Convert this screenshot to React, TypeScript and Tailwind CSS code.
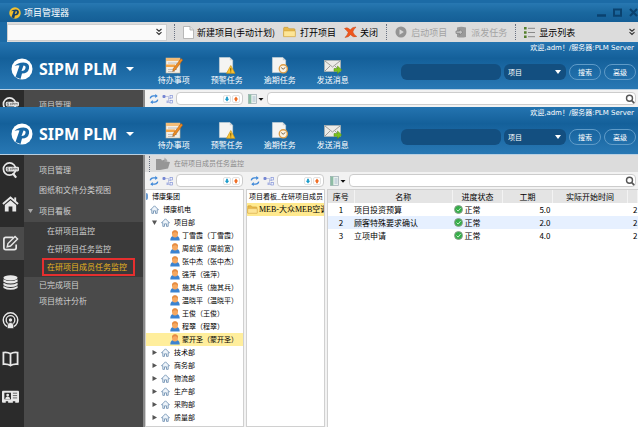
import React from "react";
import clsx from "clsx";

const people = ["丁雪霞", "周前宽", "张中杰", "强萍", "施其兵", "温晓平", "王俊", "程翠", "蒙开圣"];
const departments = ["技术部", "商务部", "物流部", "生产部", "采购部", "质量部"];

const tasks = [
    { id: 1, name: "项目投资预算", status: "正常", days: "5.0", start: "2" },
    { id: 2, name: "顾客特殊要求确认", status: "正常", days: "2.0", start: "2" },
    { id: 3, name: "立项申请", status: "正常", days: "4.0", start: "2" },
];

/* ---------- Icons ---------- */

function LogoIcon({ className, disc, letter }: { className: string; disc: string; letter: string }) {
    return (
        <svg viewBox="0 0 44 44" className={className}>
            <circle cx="22" cy="22" r="21" fill={disc} />
            <path
                d="M7 16 Q13 9 25 9 Q38 10 36 21 Q34 31 22 31 L19 42 L9 38 L17 15 Q12 14 7 16Z M25 15 L21 26 Q28 26 29 20 Q30 15 25 15Z"
                fill={letter}
                fillRule="evenodd"
            />
        </svg>
    );
}

function TodoIcon() {
    return (
        <svg viewBox="0 0 18 17" className="h-[17px] w-[18px]">
            <rect x="1" y="1" width="14" height="15" fill="#f2efe9" stroke="#c9b597" strokeWidth=".6" />
            <rect x="1" y="1" width="14" height="3" fill="#f3bd78" />
            <path d="M3 6h9M3 12.500h9M3 14.500h7" stroke="#b9b4ad" strokeWidth=".8" />
            <rect x="1" y="7.500" width="9" height="2.500" fill="#f6a545" />
            <path d="M16 1.500l1.800 1.500-7.500 10-2.600 1.400.6-2.900z" fill="#ec8a22" stroke="#9a5716" strokeWidth=".5" />
        </svg>
    );
}

function PagePath() {
    return (
        <>
            <path d="M1 .5h11l3 3v13H1z" fill="#f4f4f2" stroke="#d5d9dc" strokeWidth=".6" />
            <path d="M12 .5v3h3z" fill="#c7ced4" />
        </>
    );
}

function WarnTaskIcon() {
    return (
        <svg viewBox="0 0 18 18" className="h-[17px] w-[18px]">
            <PagePath />
            <path d="M13 9l4.500 8.300h-9z" fill="#f8c435" stroke="#cf9412" strokeWidth=".7" />
            <path d="M13 11.800v2.800M13 15.300v1" stroke="#6b4a00" strokeWidth="1" />
        </svg>
    );
}

function OverdueIcon() {
    return (
        <svg viewBox="0 0 18 18" className="h-[17px] w-[18px]">
            <PagePath />
            <circle cx="12.500" cy="12.500" r="4.300" fill="#fbf3e2" stroke="#db9c45" strokeWidth="1.400" />
            <path d="M10.300 11.200l2 1.800 2.400-2" fill="none" stroke="#5c4a34" strokeWidth=".9" />
        </svg>
    );
}

function MailIcon() {
    return (
        <svg viewBox="0 0 18 17" className="h-[17px] w-[18px]">
            <rect x=".5" y="3.500" width="16" height="11" fill="#ecebe7" stroke="#b9b6ae" strokeWidth=".6" />
            <path d="M1 4l7.500 6L16 4M1 14l5-5M16 14l-5-5" fill="none" stroke="#8d8a85" strokeWidth=".8" />
            <path d="M10 11.500h3.500V9l4.200 3.900-4.200 3.900v-2.500H10z" fill="#7cc21d" stroke="#4f8d0c" strokeWidth=".5" />
        </svg>
    );
}

function RefreshIcon() {
    return (
        <svg viewBox="0 0 16 16" className="h-[10px] w-[10px] shrink-0" fill="none" stroke="#3b86d8" strokeWidth="2.200">
            <path d="M2 7q1-4 5-4h4" />
            <path d="M14 9q-1 4-5 4H5" />
            <path d="M10 0l4 3-4 3.500zM6 9.500L2 13l4 3z" fill="#3b86d8" stroke="none" />
        </svg>
    );
}

function HierarchyIcon() {
    return (
        <svg viewBox="0 0 11 10" className="h-[10px] w-[11px] shrink-0">
            <path d="M3 2.500h3M6.500 2v6.500H9M6.500 4.500H9" fill="none" stroke="#aab4dd" strokeWidth=".7" />
            <rect x=".5" y="1" width="3" height="3" rx="1" fill="#7485d3" />
            <rect x="8" y="1.500" width="2.500" height="2.500" fill="#f0f2fc" stroke="#7485d3" strokeWidth=".6" />
            <rect x="8" y="6.500" width="2.500" height="2.500" fill="#f0f2fc" stroke="#7485d3" strokeWidth=".6" />
            <rect x="4.500" y="6.500" width="2" height="2.500" fill="#a9b4e4" />
        </svg>
    );
}

function ArrowIcon({ up }: { up?: boolean }) {
    return (
        <svg viewBox="0 0 8 8" className={clsx("h-[6px] w-[6px]", up && "rotate-180")}>
            <path d="M2.800 1h2.400v2.500H7L4 7.200 1 3.500h1.800z" fill={up ? "#f06a20" : "#1b9ccb"} />
        </svg>
    );
}

function ListMenuIcon() {
    return (
        <svg viewBox="0 0 16 10" className="h-[10px] w-4 shrink-0">
            <rect x=".5" y=".5" width="8" height="9" fill="#e9f1ee" stroke="#9aaab2" strokeWidth=".7" />
            <rect x=".5" y=".5" width="2.800" height="9" fill="#8dbca4" />
            <path d="M4.500 3h3M4.500 5h3M4.500 7h3" stroke="#8fa5c0" strokeWidth=".7" />
            <path d="M10.500 4h5L13 6.800z" fill="#111" />
        </svg>
    );
}

function SearchIcon() {
    return (
        <svg viewBox="0 0 10 10" className="h-[10px] w-[10px]" fill="none" stroke="#555">
            <circle cx="4.500" cy="4.200" r="3" strokeWidth="1.400" />
            <path d="M6.700 6.500l2.500 2.700" strokeWidth="1.800" />
        </svg>
    );
}

function FolderIcon({ className }: { className: string }) {
    return (
        <svg viewBox="0 0 14 12" className={className}>
            <path d="M.7 10.500V2q0-1 1-1h3.500l1.200 1.500h5.500q1 0 1 1v7z" fill="#e9b949" stroke="#c08e28" strokeWidth=".6" />
            <path d="M.7 11V5.500q0-.7.800-.7h11q.8 0 .8.700V11z" fill="#fde596" stroke="#cf9f3c" strokeWidth=".6" />
        </svg>
    );
}

function HouseIcon() {
    return (
        <svg viewBox="0 0 10 10" className="h-[9px] w-[9px] shrink-0">
            <path d="M.6 5.300L5 .9l4.400 4.400H8v4H6.100V6.500H3.900v2.800H2v-4z" fill="#eef4fa" stroke="#587ea5" strokeWidth=".8" />
        </svg>
    );
}

function PersonIcon() {
    return (
        <svg viewBox="0 0 10 11" className="h-[11px] w-[10px] shrink-0">
            <path d="M.3 10.500Q.3 6.500 3 6h4q2.700.5 2.700 4.500z" fill="#3b83d1" />
            <ellipse cx="5" cy="4" rx="3" ry="3.500" fill="#f6a860" />
            <path d="M2 4Q1.800.3 5 .3T8 4Q6.800 2 5 2.200T2 4z" fill="#e58c42" />
        </svg>
    );
}

function ChevronsIcon() {
    return (
        <svg viewBox="0 0 8 8" className="h-2 w-2" fill="none" stroke="#333" strokeWidth="1.100">
            <path d="M1.500 1l2.500 2.200L6.500 1M1.500 4.200L4 6.500l2.500-2.300" />
        </svg>
    );
}

/* ---------- Window chrome ---------- */

function TitleBar() {
    return (
        <div className="flex h-[22px] items-center border-t-[3px] border-[#1c6ba6] bg-linear-to-b from-[#2878b2] via-[#1a689f] to-[#145e96] pl-[9px]">
            <LogoIcon className="h-3 w-3" disc="#f3c02f" letter="#123f6b" />
            <h1 className="ml-[3px] text-[9px] leading-none text-white">项目管理器</h1>
            <div className="ml-auto flex items-center gap-[7px]">
                <button aria-label="最小化">
                    <svg viewBox="0 0 9 9" className="h-[9px] w-[9px]"><path d="M0 7.500h9" stroke="#0a426f" strokeWidth="2.500" /></svg>
                </button>
                <button aria-label="最大化">
                    <svg viewBox="0 0 9 9" className="h-[9px] w-[9px]"><path d="M1 1.500h7v6.300H1z" fill="none" stroke="#0a426f" strokeWidth="2" /></svg>
                </button>
                <button aria-label="关闭窗口">
                    <svg viewBox="0 0 9 9" className="h-[9px] w-[9px]"><path d="M1 1l7 7M8 1L1 8" stroke="#0a426f" strokeWidth="2.200" /></svg>
                </button>
            </div>
        </div>
    );
}

function Divider() {
    return <span className="h-4 border-l border-dotted border-gray-500" />;
}

function MainToolbar() {
    return (
        <div className="bg-[#1c6ba6] pl-[7px]">
            <div className="flex h-5 items-center whitespace-nowrap bg-[#dcdcdc] text-[9px] leading-none text-black">
                <div className="flex h-[17px] w-[160px] items-center border border-[#cfcfcf] bg-[#fafafa] pr-[3px]">
                    <input aria-label="命令" className="min-w-0 flex-1 bg-transparent px-1 outline-none" />
                    <ChevronsIcon />
                </div>
                <div className="ml-[7px] flex items-center gap-2">
                    <Divider />
                    <button className="flex items-center gap-[3px]">
                        <svg viewBox="0 0 11 13" className="h-[13px] w-[11px]">
                            <path d="M.5.5h6.500l3.500 3.500v8.500H.5z" fill="#fff" stroke="#aaa" strokeWidth=".8" />
                            <path d="M7 .5V4h3.500" fill="#e4e4e4" stroke="#aaa" strokeWidth=".8" />
                        </svg>
                        新建项目(手动计划)
                    </button>
                    <button className="flex items-center gap-1">
                        <FolderIcon className="h-3 w-[13px]" />
                        打开项目
                    </button>
                    <button className="flex items-center gap-[3px]">
                        <svg viewBox="0 0 13 12" className="h-3 w-[13px]">
                            <path d="M.5 2.500Q3 .5 6.300 3.800 8.500.8 12 1 9.500 3.500 8.800 6q1 2.800 4 4.500-3.500 1.300-6.200-1.800-2 2.600-5.600 2.800 2.500-2.500 3.200-5Q2.800 4.500.5 2.500z" fill="#f0561d" stroke="#c24a18" strokeWidth=".5" />
                        </svg>
                        关闭
                    </button>
                    <Divider />
                    <button className="flex items-center gap-1 text-[#a3a3a3]">
                        <svg viewBox="0 0 12 12" className="h-3 w-3">
                            <circle cx="6" cy="6" r="5.500" fill="#949494" />
                            <path d="M4.500 3.200v5.600L8.800 6z" fill="#d6d6d6" />
                        </svg>
                        启动项目
                    </button>
                    <button className="flex items-center gap-1 text-[#a3a3a3]">
                        <svg viewBox="0 0 12 12" className="h-3 w-3">
                            <path d="M2 1.500q4-1.500 9 0V11q-5 1-9 0z" fill="#999" />
                            <path d="M1 5h3.500V3.300l3.500 2.900-3.500 2.900V7.400H1z" fill="#c0c0c0" stroke="#828282" strokeWidth=".8" />
                        </svg>
                        派发任务
                    </button>
                    <Divider />
                    <button className="flex items-center gap-1">
                        <svg viewBox="0 0 11 11" className="h-[11px] w-[11px]">
                            <path d="M0 0h2.600v2.600H0zM0 4.200h2.600v2.600H0zM0 8.400h2.600V11H0z" fill="#547f2c" />
                            <path d="M4 1.300h7M4 5.500h7M4 9.700h7" stroke="#888" />
                        </svg>
                        显示列表
                    </button>
                </div>
                <button aria-label="更多" className="ml-auto pr-[2px]">
                    <ChevronsIcon />
                </button>
            </div>
        </div>
    );
}

const headerActions = [
    { label: "待办事项", Icon: TodoIcon },
    { label: "预警任务", Icon: WarnTaskIcon },
    { label: "逾期任务", Icon: OverdueIcon },
    { label: "发送消息", Icon: MailIcon },
];

function AppHeader() {
    return (
        <header className="flex h-12 justify-between border-b border-[#b9d0e2] bg-linear-to-b from-[#2474b0] via-[#14609a] via-35% to-[#2878b4] text-white">
            <div className="flex items-start">
                <button className="mt-4 ml-[11px] flex items-center">
                    <LogoIcon className="h-[22px] w-[22px]" disc="#ffffff" letter="#1a69a6" />
                    <span className="ml-[6px] whitespace-nowrap font-['Noto_Sans'] text-base leading-none font-bold">SIPM PLM</span>
                    <svg viewBox="0 0 8 4" className="ml-[9px] h-1 w-2"><path d="M0 0h8L4 4z" fill="#fff" /></svg>
                </button>
                <nav className="mt-[15px] ml-[13px] flex">
                    {headerActions.map(({ label, Icon }) => (
                        <button key={label} className="flex w-[53px] flex-col items-center text-[8px] leading-[11px] whitespace-nowrap">
                            <Icon />
                            {label}
                        </button>
                    ))}
                </nav>
            </div>
            <div className="flex flex-col items-end pr-[2px] text-[7px]">
                <p className="pr-[2px] font-['DejaVu_Sans','Noto_Sans_CJK_SC',sans-serif] leading-3 whitespace-nowrap">
                    欢迎,adm！/服务器:PLM Server
                </p>
                <div className="mt-[10px] flex h-4 gap-[3px]">
                    <input aria-label="搜索内容" className="w-[100px] rounded-md bg-[#134f80] px-2 outline-none" />
                    <div className="relative">
                        <select aria-label="搜索类型" className="h-4 w-[62px] appearance-none rounded-md bg-[#134f80] pl-1 outline-none">
                            <option>项目</option>
                        </select>
                        <svg viewBox="0 0 6 4" className="pointer-events-none absolute top-[6px] right-[5px] h-1 w-[6px]"><path d="M0 0h6L3 4z" fill="#fff" /></svg>
                    </div>
                    <button className="w-8 rounded-lg border border-[#5f9bc8]">搜索</button>
                    <button className="w-8 rounded-lg border border-[#5f9bc8]">高级</button>
                </div>
            </div>
        </header>
    );
}

/* ---------- Left navigation ---------- */

const railItems = [
    {
        label: "查询",
        className: "h-[30px]",
        art: (
            <>
                <circle cx="8" cy="7.500" r="6.500" fill="none" stroke="#e8e8e8" strokeWidth="1.800" />
                <path d="M11.500 12l3.500 4.500" stroke="#e8e8e8" strokeWidth="2.400" />
                <rect x="4" y="5" width="14" height="5" rx="1.500" fill="#e8e8e8" />
                <path d="M7.500 6.300H5.500v1.300H7v1.200H5M9 6.300v2.500M10.500 8.800V6.300h1.700v1.300h-1.700M13.500 8.800V6.300l1.200 1.300 1.300-1.300v2.500" fill="none" stroke="#555" strokeWidth=".6" />
            </>
        ),
    },
    {
        label: "首页",
        className: "h-[38px]",
        art: (
            <>
                <path d="M1 8.500L9 1.500l8 7" fill="none" stroke="#e8e8e8" strokeWidth="2" />
                <path d="M13 1.500h2v4h-2z" fill="#e8e8e8" />
                <path d="M3 9.500l6-5 6 5v7h-4V11H7v5.500H3z" fill="#e8e8e8" />
            </>
        ),
    },
    {
        label: "项目",
        className: "h-10",
        active: true,
        art: (
            <>
                <path d="M12 2.500H4Q2 2.500 2 4.500v9q0 2 2 2h9q2 0 2-2V10" fill="none" stroke="#e8e8e8" strokeWidth="1.800" />
                <path d="M5.500 12.500l.8-3.500 7.500-7.500 2.700 2.700L9 11.700z" fill="none" stroke="#e8e8e8" strokeWidth="1.500" />
            </>
        ),
    },
    {
        label: "数据",
        className: "h-[38px]",
        art: (
            <>
                <ellipse cx="9" cy="4" rx="7.500" ry="2.800" fill="#e8e8e8" />
                <path d="M1.500 5.500q7.500 4 15 0v2.600q-7.500 4-15 0zM1.500 9.200q7.500 4 15 0v2.600q-7.500 4-15 0zM1.500 12.800q7.500 4 15 0V14.800q-7.500 4-15 0z" fill="#e8e8e8" />
            </>
        ),
    },
    {
        label: "广播",
        className: "h-[38px]",
        art: (
            <>
                <circle cx="9" cy="8.500" r="7.700" fill="none" stroke="#e8e8e8" strokeWidth="1.500" />
                <circle cx="9" cy="8.500" r="4.600" fill="none" stroke="#e8e8e8" strokeWidth="1.400" />
                <circle cx="9" cy="8.500" r="1.800" fill="#e8e8e8" />
                <path d="M5.800 17.500v-3.700q0-2.600 3.200-2.600t3.200 2.600v3.700z" fill="#e8e8e8" stroke="#2b2b2b" strokeWidth=".6" />
            </>
        ),
    },
    {
        label: "手册",
        className: "h-[38px]",
        art: (
            <path d="M9 4Q6 2 1.500 2.700v12.300q4.500-.5 7.500 1.500 3-2 7.500-1.500V2.700Q12 2 9 4zV16" fill="none" stroke="#e8e8e8" strokeWidth="1.900" />
        ),
    },
    {
        label: "名片",
        className: "h-[38px]",
        art: (
            <>
                <rect x="0" y="3" width="18" height="12.500" rx="1" fill="#e8e8e8" />
                <rect x="2.500" y="5" width="7" height="7" fill="#2b2b2b" />
                <circle cx="6" cy="7.500" r="1.500" fill="#e8e8e8" />
                <path d="M3.500 12q0-3 2.500-3t2.500 3z" fill="#e8e8e8" />
                <path d="M11.500 5.500h4.500M11.500 8h4.500M11.500 10.500h4.500" stroke="#555" strokeWidth=".9" />
                <path d="M4 14h2.500v2H4zM11.500 14H14v2h-2.500z" fill="#2b2b2b" />
            </>
        ),
    },
];

function Rail({ items }: { items: typeof railItems }) {
    return (
        <nav className="w-6 shrink-0 bg-[#2b2b2b]">
            {items.map((item) => (
                <div key={item.label} className={clsx("flex items-center", item.className)}>
                    <button
                        aria-label={item.label}
                        className={clsx("flex w-full justify-center pr-[3px]", item.active ? "bg-[#4a4a4a] py-2" : "")}
                    >
                        <svg viewBox="0 0 18 18" className="h-[17px] w-[17px]">{item.art}</svg>
                    </button>
                </div>
            ))}
        </nav>
    );
}

function SideMenu({ collapsed }: { collapsed?: boolean }) {
    return (
        <aside className="w-[121px] shrink-0 border-r-2 border-[#8a8a8a] bg-[#4a4a4a] pt-[5px] text-[8px] whitespace-nowrap text-[#cfcfcf]">
            <a href="#" className="block pl-[15px] leading-5">项目管理</a>
            {!collapsed && (
                <>
                    <a href="#" className="block pl-[15px] leading-5">图纸和文件分类视图</a>
                    <a href="#" className="flex items-center gap-[6px] pl-1 leading-[22px]">
                        <svg viewBox="0 0 5 4" className="h-1 w-[5px]"><path d="M0 0h5L2.500 4z" fill="#aaa" /></svg>
                        项目看板
                    </a>
                    <div className="bg-[#3a3a3a] pb-px pl-[18px]">
                        <a href="#" className="block pl-[5px] leading-[18px]">在研项目监控</a>
                        <a href="#" className="block pl-[5px] leading-[18px]">在研项目任务监控</a>
                        <a href="#" className="block w-[93px] border-2 border-[#e52f2f] pl-[3px] leading-[14px] text-[#e8b420]">
                            在研项目成员任务监控
                        </a>
                    </div>
                    <a href="#" className="block pl-[15px] leading-4">已完成项目</a>
                    <a href="#" className="block pl-[15px] leading-4">项目统计分析</a>
                </>
            )}
        </aside>
    );
}

/* ---------- Content panels ---------- */

function FilterBar({ label }: { label: string }) {
    return (
        <div className="flex h-[17px] items-center gap-[3px] pr-px pl-1">
            <button aria-label="刷新"><RefreshIcon /></button>
            <button aria-label="展开层级"><HierarchyIcon /></button>
            <div className="flex h-[13px] min-w-0 flex-1 items-center gap-px rounded-sm border border-[#cccccc] bg-white pr-[2px]">
                <input aria-label={label} className="min-w-0 flex-1 px-1 text-[8px] outline-none" />
                <button aria-label="向下查找" className="rounded-xs border border-[#e2e2e2]"><ArrowIcon /></button>
                <button aria-label="向上查找" className="rounded-xs border border-[#e2e2e2]"><ArrowIcon up /></button>
            </div>
        </div>
    );
}

function SearchBar() {
    return (
        <div className="flex h-[17px] items-center gap-[3px] pr-[2px] pl-[3px]">
            <button aria-label="列设置"><ListMenuIcon /></button>
            <div className="flex h-[13px] min-w-0 flex-1 items-center rounded-sm border border-[#cccccc] bg-white">
                <input aria-label="表格搜索" className="min-w-0 flex-1 px-1 text-[8px] outline-none" />
                <button aria-label="搜索"><SearchIcon /></button>
            </div>
        </div>
    );
}

function ToggleMark({ open }: { open?: boolean }) {
    return (
        <svg viewBox="0 0 5 5" className={clsx("h-[5px] w-[5px] shrink-0", open && "rotate-90")}>
            <path d="M.5 0L5 2.500.5 5z" fill="#555" />
        </svg>
    );
}

function OrgTree() {
    return (
        <ul className="flex-1 overflow-hidden border border-[#d0d0d0] bg-white text-[7px] leading-[13px] whitespace-nowrap text-black">
            <li className="flex items-center gap-1">
                <span className="h-[7px] w-[2px] rounded-r-xs bg-[#6b9bd0]" />
                博康集团
            </li>
            <li className="flex items-center gap-1 pl-[4px]"><HouseIcon />博康机电</li>
            <li className="flex items-center gap-1 pl-[6px]"><ToggleMark open /><HouseIcon />项目部</li>
            {people.map((name) => (
                <li
                    key={name}
                    className={clsx("flex h-[13px] items-center gap-[2px] pl-6", name === "蒙开圣" && "bg-[#ffee9c]")}
                >
                    <PersonIcon />
                    {name}（{name}）
                </li>
            ))}
            {departments.map((name) => (
                <li key={name} className="flex items-center gap-1 pl-[6px]"><ToggleMark /><HouseIcon />{name}</li>
            ))}
        </ul>
    );
}

function BoardList() {
    return (
        <ul className="flex-1 overflow-hidden border border-[#d0d0d0] bg-white leading-[13px] whitespace-nowrap text-black">
            <li className="pl-[2px] text-[7px]">项目看板_在研项目成员</li>
            <li className="flex items-center gap-px bg-[#ffe98e] font-['Liberation_Serif','Noto_Sans_CJK_SC',serif] text-[8px]">
                <FolderIcon className="h-[9px] w-[11px] shrink-0" />
                MEB-大众MEB空调
            </li>
        </ul>
    );
}

function TaskTable() {
    return (
        <div className="flex-1 border-t border-l border-[#d0d0d0] bg-white">
            <table className="w-full table-fixed text-[8px] leading-[13px] whitespace-nowrap text-black">
                <colgroup>
                    <col className="w-[26px]" />
                    <col />
                    <col className="w-[50px]" />
                    <col className="w-[50px]" />
                    <col className="w-[75px]" />
                    <col className="w-[10px]" />
                </colgroup>
                <thead className="bg-[#e4e4e4]">
                    <tr>
                        {["序号", "名称", "进度状态", "工期", "实际开始时间", ""].map((title) => (
                            <th key={title} className="border-r border-[#f3f3f3] p-0 text-center font-normal">{title}</th>
                        ))}
                    </tr>
                </thead>
                <tbody>
                    {tasks.map((task) => (
                        <tr key={task.id} className="even:bg-[#e6f0ff]">
                            <td className="p-0 text-center">{task.id}</td>
                            <td className="p-0">{task.name}</td>
                            <td className="p-0">
                                <span className="flex items-center gap-[2px] pl-px">
                                    <svg viewBox="0 0 9 9" className="h-[9px] w-[9px]">
                                        <circle cx="4.500" cy="4.500" r="4" fill="#35ae48" stroke="#8f9a91" strokeWidth=".9" />
                                        <path d="M2.600 4.600l1.500 1.500 2.500-3" fill="none" stroke="#d8f5da" strokeWidth=".9" />
                                    </svg>
                                    {task.status}
                                </span>
                            </td>
                            <td className="p-0 pr-[2px] text-right">{task.days}</td>
                            <td className="p-0" />
                            <td className="p-0 text-right">{task.start}</td>
                        </tr>
                    ))}
                </tbody>
            </table>
        </div>
    );
}

function Breadcrumb() {
    return (
        <div className="flex h-[17px] items-center bg-[#dcdcdc] pl-1 text-[7px] whitespace-nowrap text-[#8a8a8a]">
            <Divider />
            <svg viewBox="0 0 14 13" className="mr-1 ml-[6px] h-[13px] w-[14px]">
                <path d="M0 2h5l1 1.500L10 2l.5 2.500L14 5l-2 6.500-8 1.500H0z" fill="#969696" />
                <path d="M8.500.5l3 3-3 2z" fill="#a6a6a6" />
            </svg>
            在研项目成员任务监控
        </div>
    );
}

export default function App() {
    return (
        <div className="flex min-h-screen flex-col overflow-hidden bg-[#f2f2f2] font-['Noto_Sans_CJK_SC',sans-serif]">
            <TitleBar />
            <MainToolbar />

            {/* Window behind, only its top edge shows */}
            <AppHeader />
            <div className="flex h-[17px] overflow-hidden">
                <Rail items={railItems.slice(0, 1)} />
                <SideMenu collapsed />
                <div className="w-[99px] shrink-0"><FilterBar label="后台组织筛选" /></div>
                <div className="min-w-0 flex-1 pl-px"><SearchBar /></div>
            </div>

            {/* Front window */}
            <AppHeader />
            <div className="flex flex-1">
                <Rail items={railItems} />
                <SideMenu />
                <main className="flex min-w-0 flex-1 flex-col">
                    <Breadcrumb />
                    <div className="flex flex-1 gap-[2px]">
                        <section className="flex w-[99px] shrink-0 flex-col">
                            <FilterBar label="组织筛选" />
                            <OrgTree />
                        </section>
                        <section className="flex w-[79px] shrink-0 flex-col">
                            <FilterBar label="看板筛选" />
                            <BoardList />
                        </section>
                        <section className="flex min-w-0 flex-1 flex-col">
                            <SearchBar />
                            <TaskTable />
                        </section>
                    </div>
                </main>
            </div>
        </div>
    );
}
